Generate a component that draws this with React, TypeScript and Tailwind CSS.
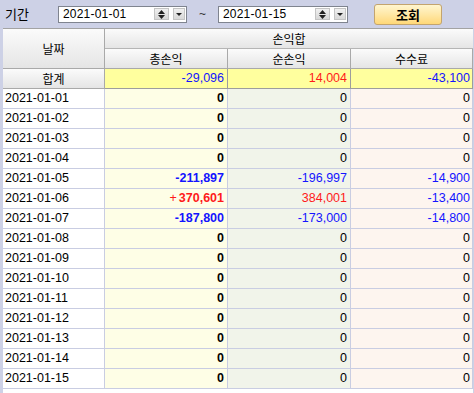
import React from "react";

type Row = { date: string; total: string; net: string; fee: string };

const zeroRow = (d: string): Row => ({ date: d, total: "0", net: "0", fee: "0" });

const rows: Row[] = [
  zeroRow("2021-01-01"),
  zeroRow("2021-01-02"),
  zeroRow("2021-01-03"),
  zeroRow("2021-01-04"),
  { date: "2021-01-05", total: "-211,897", net: "-196,997", fee: "-14,900" },
  { date: "2021-01-06", total: "+370,601", net: "384,001", fee: "-13,400" },
  { date: "2021-01-07", total: "-187,800", net: "-173,000", fee: "-14,800" },
  zeroRow("2021-01-08"),
  zeroRow("2021-01-09"),
  zeroRow("2021-01-10"),
  zeroRow("2021-01-11"),
  zeroRow("2021-01-12"),
  zeroRow("2021-01-13"),
  zeroRow("2021-01-14"),
  zeroRow("2021-01-15"),
];

// 음수 파랑, 양수 빨강, 0 검정
const tone = (v: string) => {
  if (v.startsWith("-")) return "text-[#1414ff]";
  if (v === "0") return "text-black";
  return "text-[#ff1a1a]";
};

const DateBox = ({ value, width }: { value: string; width: string }) => (
  <div className={`${width} h-[17px] bg-white border border-[#7f848f] flex items-center justify-between pl-[4px] pr-[1px]`}>
    <span className="text-[12px] text-black leading-none tracking-[0.2px]">{value}</span>
    <div className="flex items-center gap-[4px]">
      {/* 스핀 버튼 */}
      <div className="w-[15px] h-[12px] bg-gradient-to-b from-[#f0f0f0] to-[#d8d8d8] border border-[#c4c4c4] flex flex-col items-center justify-center gap-[1px]">
        <svg width="7" height="4" viewBox="0 0 7 4">
          <polygon points="3.5,0 7,4 0,4" fill="#222" />
        </svg>
        <svg width="7" height="4" viewBox="0 0 7 4">
          <polygon points="0,0 7,0 3.5,4" fill="#222" />
        </svg>
      </div>
      {/* 드롭다운 버튼 */}
      <div className="w-[12px] h-[12px] bg-gradient-to-b from-[#f0f0f0] to-[#d8d8d8] border border-[#c4c4c4] flex items-center justify-center">
        <svg width="6" height="3" viewBox="0 0 6 3">
          <polygon points="0,0 6,0 3,3" fill="#222" />
        </svg>
      </div>
    </div>
  </div>
);

const ko = "font-['Noto_Sans_CJK_KR',sans-serif]";
const hdr = "bg-gradient-to-b from-[#fbfbfb] to-[#e5e5e5]";

export default function App() {
  return (
    <div className="w-[474px] h-[393px] overflow-hidden bg-[#cdd1e6] font-['Liberation_Sans',Arial,sans-serif]">
      {/* 조회 조건 바 */}
      <div className="h-[28px] flex items-center">
        <span className={`w-[58px] pl-[5px] text-[13px] text-black ${ko}`}>기간</span>
        <DateBox value="2021-01-01" width="w-[129px]" />
        <span className="w-[31px] text-center text-[12px] text-[#333]">~</span>
        <DateBox value="2021-01-15" width="w-[130px]" />
        <div className="w-[26px]" />
        <button className={`w-[68px] h-[21px] rounded-[3px] border border-[#c3a46e] bg-gradient-to-b from-[#fff6cf] to-[#ffd877] text-[13px] font-bold text-black ${ko} leading-none`}>
          조회
        </button>
      </div>

      {/* 그리드 */}
      <div className="ml-[3px] w-[470px] h-[365px] bg-white border-t border-[#a3a3a3]">
        {/* 헤더 */}
        <div className={`flex text-[12px] text-black ${ko}`}>
          <div className={`w-[102px] h-[40px] ${hdr} border-r border-b border-[#a9a9a9] flex items-center justify-center`}>
            날짜
          </div>
          <div className="flex flex-col">
            <div className={`w-[368px] h-[20px] ${hdr} border-b border-[#b5b5b5] flex items-center justify-center`}>
              손익합
            </div>
            <div className="flex h-[20px]">
              <div className={`w-[123px] ${hdr} border-r border-b border-[#a9a9a9] flex items-center justify-center`}>총손익</div>
              <div className={`w-[123px] ${hdr} border-r border-b border-[#a9a9a9] flex items-center justify-center`}>순손익</div>
              <div className={`w-[122px] ${hdr} border-r border-b border-[#a9a9a9] flex items-center justify-center`}>수수료</div>
            </div>
          </div>
        </div>

        {/* 합계 */}
        <div className="flex h-[20px] text-[12.5px]">
          <div className={`w-[102px] ${hdr} border-r border-b border-[#a9a9a9] flex items-center justify-center text-[12px] text-black ${ko}`}>
            합계
          </div>
          <div className="w-[123px] bg-[#ffff9e] border-r border-b border-[#9d9d9d] flex items-center justify-end pr-[3px] text-[#1414ff]">-29,096</div>
          <div className="w-[123px] bg-[#ffff9e] border-r border-b border-[#9d9d9d] flex items-center justify-end pr-[3px] text-[#ff1a1a]">14,004</div>
          <div className="w-[122px] bg-[#ffff9e] border-r border-b border-[#9d9d9d] flex items-center justify-end pr-[2px] text-[#1414ff]">-43,100</div>
        </div>

        {/* 일자별 */}
        {rows.map((r) => (
          <div key={r.date} className="flex h-[20px] text-[12.5px]">
            <div className="w-[102px] bg-white border-r border-b border-[#c9cde2] flex items-center pl-[2px] text-black">
              {r.date}
            </div>
            <div className={`w-[123px] bg-[#fefee6] border-r border-b border-[#c9cde2] flex items-center justify-end pr-[3px] font-bold ${tone(r.total)}`}>
              {r.total.startsWith("+") ? (
                <>
                  <span className="mr-[2px] font-normal">+</span>
                  {r.total.slice(1)}
                </>
              ) : (
                r.total
              )}
            </div>
            <div className={`w-[123px] bg-[#f1f4ea] border-r border-b border-[#c9cde2] flex items-center justify-end pr-[3px] ${tone(r.net)}`}>
              {r.net}
            </div>
            <div className={`w-[122px] bg-[#fdf5ef] border-r border-b border-[#c9cde2] flex items-center justify-end pr-[2px] ${tone(r.fee)}`}>
              {r.fee}
            </div>
          </div>
        ))}
      </div>
    </div>
  );
}
